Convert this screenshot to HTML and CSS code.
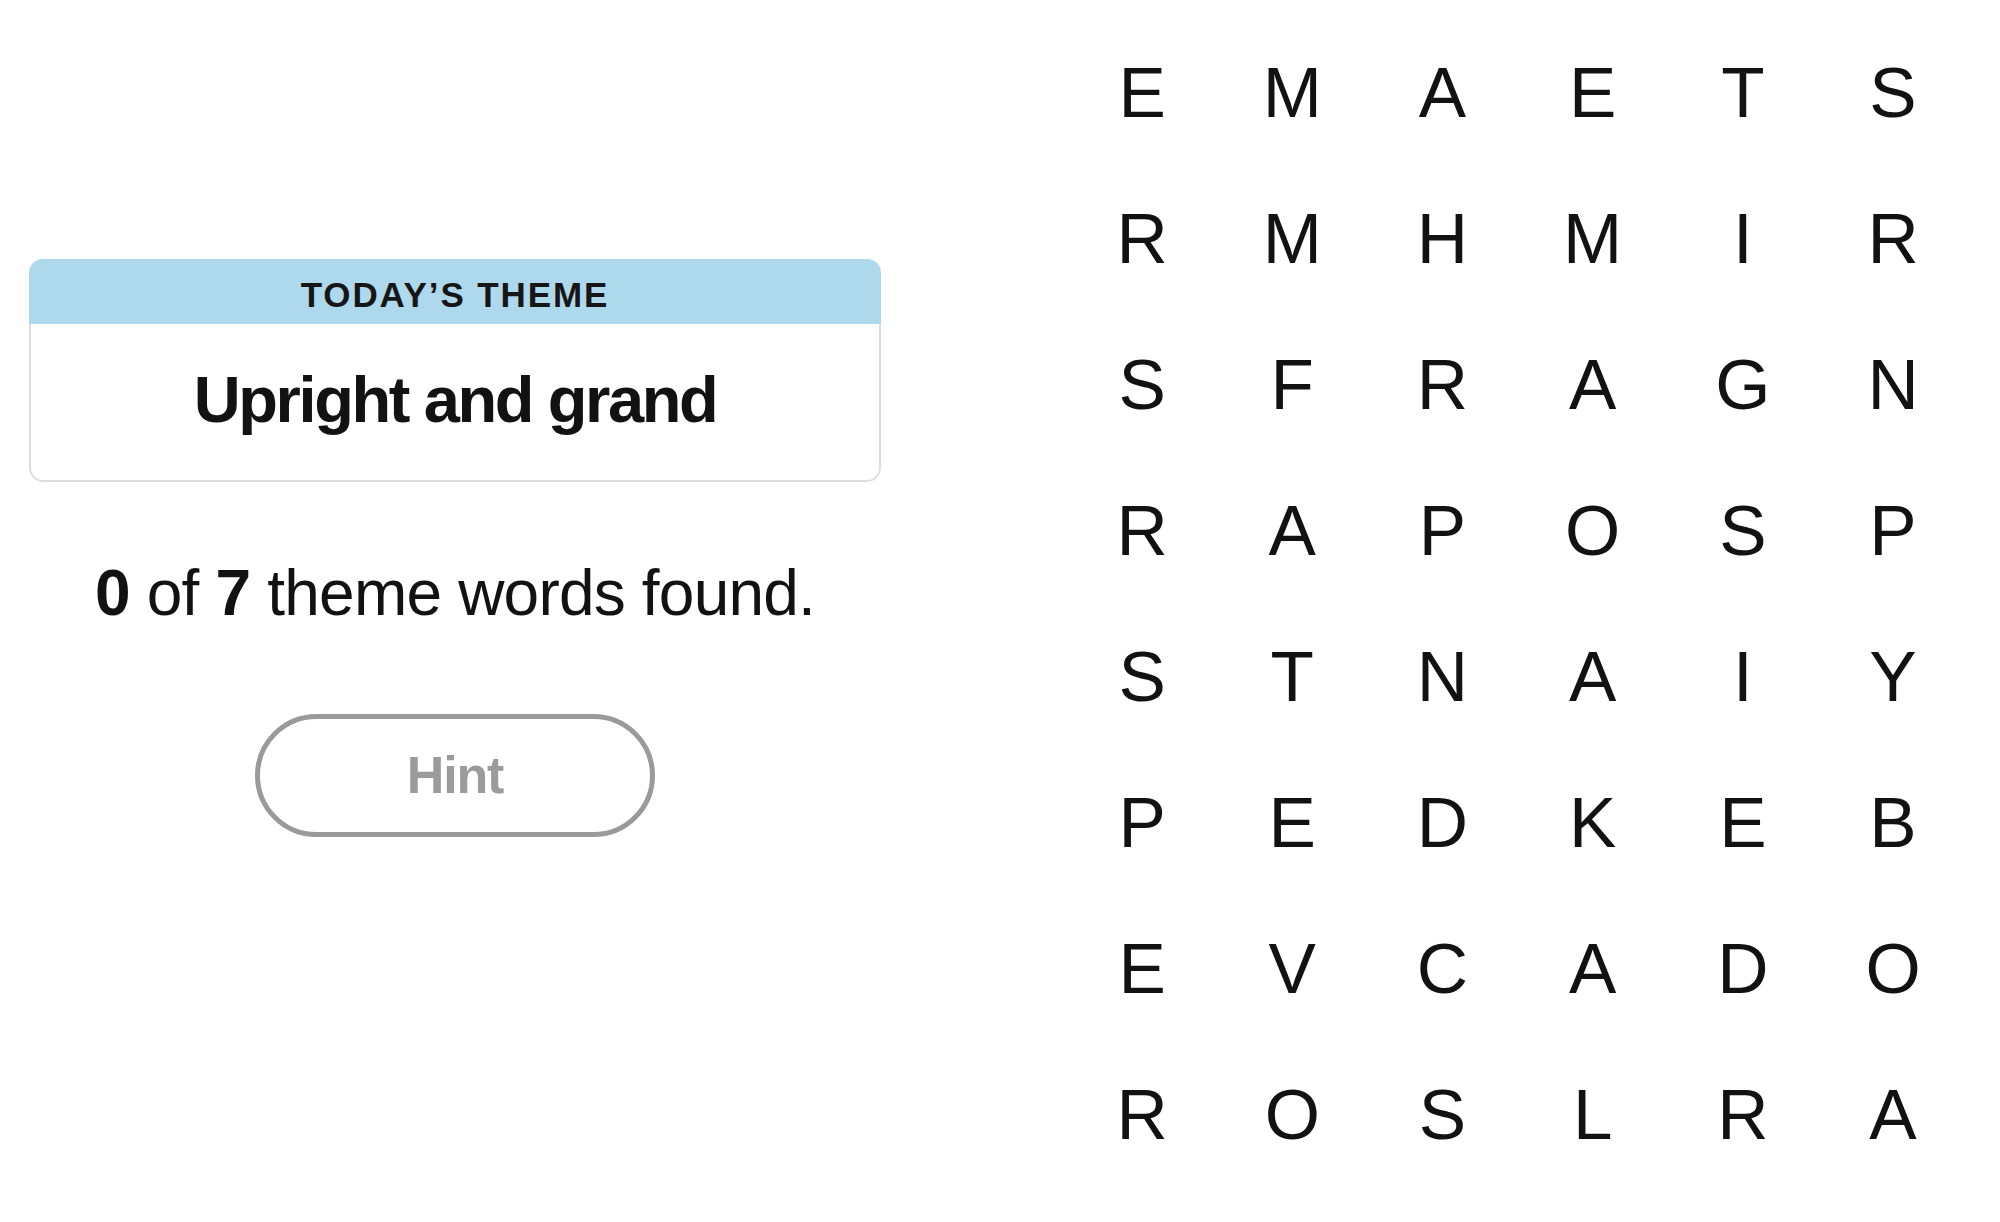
FILE: index.html
```html
<!DOCTYPE html>
<html lang="en">
<head>
<meta charset="utf-8">
<title>Strands</title>
<link rel="stylesheet" href="styles.css">
</head>
<body>
<main class="game">
  <section class="info">
    <div class="theme-card">
      <div class="theme-head">TODAY’S THEME</div>
      <div class="theme-body">Upright and grand</div>
    </div>
    <p class="progress"><b>0</b> of <b>7</b> theme words found.</p>
    <button class="hint" type="button">Hint</button>
  </section>
  <section class="board">
    <div class="cell">E</div><div class="cell">M</div><div class="cell">A</div><div class="cell">E</div><div class="cell">T</div><div class="cell">S</div>
    <div class="cell">R</div><div class="cell">M</div><div class="cell">H</div><div class="cell">M</div><div class="cell">I</div><div class="cell">R</div>
    <div class="cell">S</div><div class="cell">F</div><div class="cell">R</div><div class="cell">A</div><div class="cell">G</div><div class="cell">N</div>
    <div class="cell">R</div><div class="cell">A</div><div class="cell">P</div><div class="cell">O</div><div class="cell">S</div><div class="cell">P</div>
    <div class="cell">S</div><div class="cell">T</div><div class="cell">N</div><div class="cell">A</div><div class="cell">I</div><div class="cell">Y</div>
    <div class="cell">P</div><div class="cell">E</div><div class="cell">D</div><div class="cell">K</div><div class="cell">E</div><div class="cell">B</div>
    <div class="cell">E</div><div class="cell">V</div><div class="cell">C</div><div class="cell">A</div><div class="cell">D</div><div class="cell">O</div>
    <div class="cell">R</div><div class="cell">O</div><div class="cell">S</div><div class="cell">L</div><div class="cell">R</div><div class="cell">A</div>
  </section>
</main>
</body>
</html>
```
FILE: styles.css
```css
html, body {
  margin: 0;
  padding: 0;
  background: #ffffff;
}

body {
  font-family: "Liberation Sans", Arial, sans-serif;
  color: #121212;
}

.game {
  display: flex;
  align-items: flex-start;
}

.info {
  width: 852px;
  margin-left: 29px;
  padding-top: 259px;
  display: flex;
  flex-direction: column;
  align-items: center;
}

.theme-card {
  width: 852px;
  box-sizing: border-box;
  border-radius: 14px;
  overflow: hidden;
  background: #ffffff;
}

.theme-head {
  background: #aed8ec;
  height: 65px;
  box-sizing: border-box;
  padding-top: 6px;
  line-height: 59px;
  text-align: center;
  font-size: 35px;
  font-weight: 700;
  letter-spacing: 1.9px;
  color: #161616;
}

.theme-body {
  border: 2px solid #dddddd;
  border-top: none;
  border-radius: 0 0 14px 14px;
  padding-top: 36px;
  padding-bottom: 40px;
  line-height: 80px;
  text-align: center;
  font-size: 65px;
  font-weight: 700;
  letter-spacing: -2.4px;
  color: #121212;
}

.progress {
  margin: 79px 0 0;
  font-size: 64px;
  line-height: 64px;
  letter-spacing: -0.8px;
  white-space: nowrap;
  color: #121212;
}

.progress b {
  font-weight: 700;
}

.hint {
  margin-top: 89px;
  width: 400px;
  height: 123px;
  box-sizing: border-box;
  border: 5px solid #9a9a9a;
  border-radius: 62px;
  background: #ffffff;
  padding: 0;
  font-family: "Liberation Sans", Arial, sans-serif;
  font-size: 52px;
  font-weight: 700;
  line-height: 113px;
  letter-spacing: -1.2px;
  color: #9b9b9b;
}

.board {
  margin-left: 186px;
  padding-top: 20px;
  display: grid;
  grid-template-columns: repeat(6, 150.2px);
  grid-auto-rows: 146px;
}

.cell {
  text-align: center;
  font-size: 71px;
  line-height: 146px;
  color: #121212;
}
```
